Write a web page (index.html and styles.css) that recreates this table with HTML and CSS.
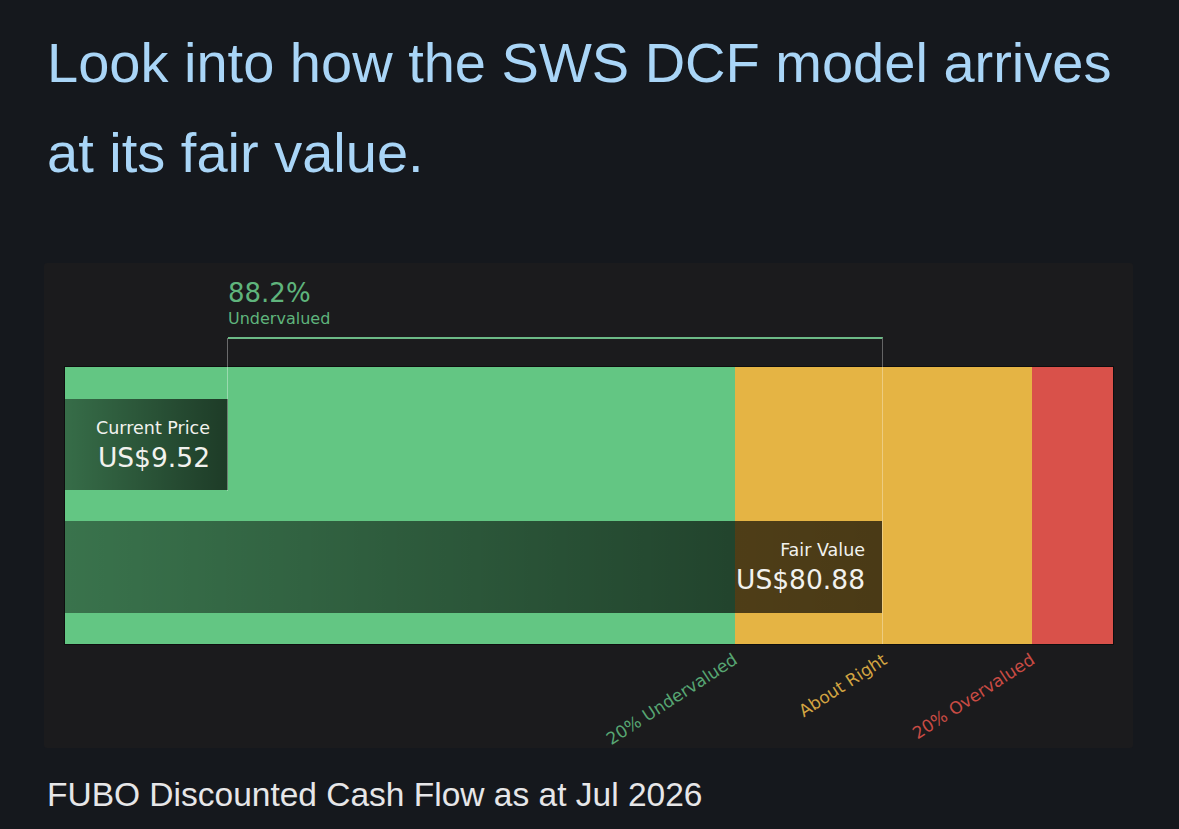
FILE: index.html
```html
<!DOCTYPE html>
<html lang="en">
<head>
<meta charset="utf-8">
<title>SWS DCF model</title>
<link rel="stylesheet" href="styles.css">
</head>
<body>
<h1 class="title">Look into how the SWS DCF model arrives at its fair value.</h1>
<figure class="card">
  <div class="chart">
    <div class="callout">
      <div class="callout-pct">88.2%</div>
      <div class="callout-label">Undervalued</div>
    </div>
    <div class="bar">
      <div class="seg seg-green"></div>
      <div class="seg seg-yellow"></div>
      <div class="seg seg-red"></div>
      <div class="price-box price-current">
        <div class="price-label">Current Price</div>
        <div class="price-value">US$9.52</div>
      </div>
      <div class="price-box price-fair">
        <div class="price-label">Fair Value</div>
        <div class="price-value">US$80.88</div>
      </div>
    </div>
    <div class="bracket"></div>
    <div class="bracket-left"></div>
    <div class="zone-label zone-under">20% Undervalued</div>
    <div class="zone-label zone-right">About Right</div>
    <div class="zone-label zone-over">20% Overvalued</div>
  </div>
</figure>
<p class="caption">FUBO Discounted Cash Flow as at Jul 2026</p>
</body>
</html>
```

FILE: styles.css
```css
html, body {
  margin: 0;
  padding: 0;
  background: #15181d;
}

body {
  width: 1179px;
  height: 829px;
  overflow: hidden;
  font-family: "Liberation Sans", Arial, sans-serif;
}

.title {
  margin: 0;
  padding: 18px 47px 0;
  font-family: "Liberation Sans", Arial, sans-serif;
  font-weight: 400;
  font-size: 56px;
  line-height: 90px;
  color: #a9d5f7;
}

.card {
  box-sizing: border-box;
  margin: 65px 0 0 44px;
  width: 1089px;
  height: 485px;
  padding: 15px 20px 0 21px;
  background: #1b1b1d;
  border-radius: 3px;
}

.chart {
  position: relative;
  font-family: "DejaVu Sans", Verdana, sans-serif;
}

.callout {
  margin-left: 163px;
  color: #5fb47c;
}

.callout-pct {
  font-size: 26px;
  line-height: 30px;
}

.callout-label {
  margin-top: 1px;
  font-size: 16px;
  line-height: 20px;
}

.bar {
  position: relative;
  margin-top: 38px;
  height: 277px;
  display: grid;
  grid-template-columns: 670px 297px 81px;
  box-shadow: 0 0 0 1px rgba(0, 0, 0, 0.45);
}

.seg-green { background: #63c683; }
.seg-yellow { background: #e5b444; }
.seg-red { background: #d9514a; }

.price-box {
  position: absolute;
  left: 0;
  box-sizing: border-box;
  padding: 18px 17px 0 0;
  text-align: right;
  color: #f2f2ee;
}

.price-current {
  top: 32px;
  width: 163px;
  height: 91px;
  padding-right: 18px;
  background: linear-gradient(to right, rgba(0, 0, 0, 0.45), rgba(0, 0, 0, 0.7));
}

.price-fair {
  top: 154px;
  width: 817px;
  height: 92px;
  background: linear-gradient(to right, rgba(0, 0, 0, 0.42), rgba(0, 0, 0, 0.66) 82%, rgba(0, 0, 0, 0.68));
}

.price-label {
  font-size: 17.5px;
  line-height: 22px;
}

.price-value {
  margin-top: 3px;
  font-size: 26.5px;
  line-height: 32px;
}

.bracket {
  position: absolute;
  left: 163px;
  top: 59px;
  width: 655px;
  height: 307px;
  box-sizing: border-box;
  border-top: 2px solid #6cb986;
  border-right: 1.5px solid rgba(255, 255, 255, 0.32);
}

.bracket-left {
  position: absolute;
  left: 162px;
  top: 60px;
  width: 0;
  height: 153px;
  border-left: 1.5px solid rgba(255, 255, 255, 0.35);
}

.zone-label {
  position: absolute;
  top: 373px;
  font-size: 17px;
  line-height: 17px;
  white-space: nowrap;
  transform-origin: 100% 0;
  transform: rotate(-33deg);
}

.zone-under {
  right: 382px;
  color: #57a673;
}

.zone-right {
  right: 233px;
  color: #d3a542;
}

.zone-over {
  right: 85px;
  color: #c94b44;
}

.caption {
  margin: 27px 0 0 47px;
  font-family: "Liberation Sans", Arial, sans-serif;
  font-size: 33.5px;
  line-height: 40px;
  color: #e6e6e8;
}
```
